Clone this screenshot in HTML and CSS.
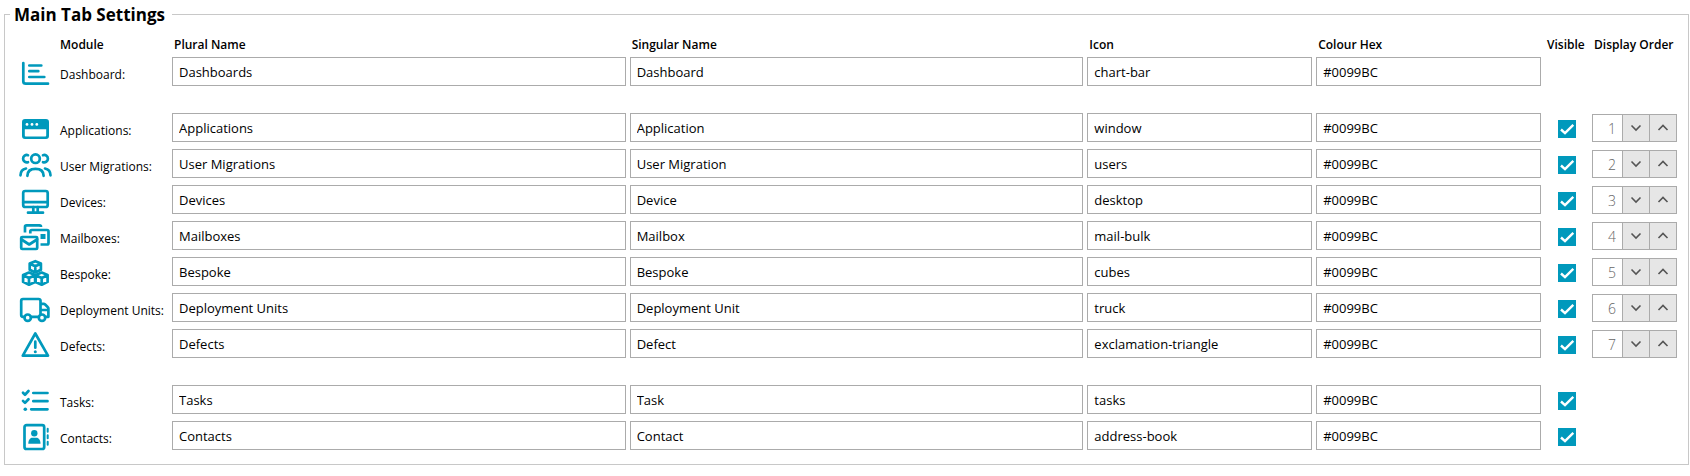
FILE: index.html
```html
<!DOCTYPE html>
<html lang="en">
<head>
    <meta charset="UTF-8">
    <meta name="viewport" content="width=device-width, initial-scale=1.0">
    <title>Main Tab Settings</title>
    <link rel="stylesheet" href="styles.css">
</head>
<body>
<form>
    <fieldset class="settings">
        <legend>Main Tab Settings</legend>

        <table class="modules">
            <thead>
                <tr>
                    <td></td>
                    <th>Module</th>
                    <th>Plural Name</th>
                    <th>Singular Name</th>
                    <th>Icon</th>
                    <th>Colour Hex</th>
                    <th>Visible</th>
                    <th>Display Order</th>
                </tr>
            </thead>

            <tbody>
                <tr>
                    <td class="icon"><svg viewBox="0 0 36 30"><path d="M5.3 5v18.2a2.5 2.5 0 0 0 2.5 2.5H30M11.3 7.5h12M11.3 13.2h9M11.3 19h15"/></svg></td>
                    <td class="name"><label for="dashboard">Dashboard:</label></td>
                    <td class="field"><input type="text" id="dashboard" value="Dashboards"></td>
                    <td class="field"><input type="text" aria-label="Singular name" value="Dashboard"></td>
                    <td class="field"><input type="text" aria-label="Icon" value="chart-bar"></td>
                    <td class="field"><input type="text" aria-label="Colour hex" value="#0099BC"></td>
                </tr>
            </tbody>

            <tbody>
                <tr>
                    <td class="icon"><svg viewBox="0 0 36 30"><path class="solid" fill-rule="evenodd" d="M7 5h21a3 3 0 0 1 3 3v14a3 3 0 0 1-3 3H7a3 3 0 0 1-3-3V8a3 3 0 0 1 3-3zM6.8 15.3v6.2a1 1 0 0 0 1 1h19.4a1 1 0 0 0 1-1v-6.2z"/><g fill="#fff" stroke="none"><circle cx="9" cy="10.4" r="1.4"/><circle cx="14" cy="10.4" r="1.4"/><circle cx="18.8" cy="10.4" r="1.4"/></g></svg></td>
                    <td class="name"><label for="applications">Applications:</label></td>
                    <td class="field"><input type="text" id="applications" value="Applications"></td>
                    <td class="field"><input type="text" aria-label="Singular name" value="Application"></td>
                    <td class="field"><input type="text" aria-label="Icon" value="window"></td>
                    <td class="field"><input type="text" aria-label="Colour hex" value="#0099BC"></td>
                    <td class="visible"><input type="checkbox" aria-label="Visible" checked></td>
                    <td class="order">
                        <div class="spinner">
                            <input type="text" aria-label="Display order" value="1">
                            <button type="button" aria-label="Down"><svg viewBox="0 0 12 8"><path d="M1.5 1.5 6 6l4.5-4.5"/></svg></button>
                            <button type="button" aria-label="Up"><svg viewBox="0 0 12 8"><path d="M1.5 6 6 1.5 10.5 6"/></svg></button>
                        </div>
                    </td>
                </tr>
                <tr>
                    <td class="icon"><svg viewBox="0 0 36 30"><circle cx="17.5" cy="8.7" r="4.3"/><path d="M9.4 25.8c0-4.6 3.2-7 8.1-7s8.1 2.400 8.1 7M10 5.2a3.7 3.700 0 1 0 0 7M25 5.200a3.700 3.700 0 1 1 0 7M2.500 25.300c.1-3.800 1.600-6.100 5.500-6.800M32.500 25.300c-.1-3.800-1.600-6.100-5.500-6.800"/></svg></td>
                    <td class="name"><label for="users">User Migrations:</label></td>
                    <td class="field"><input type="text" id="users" value="User Migrations"></td>
                    <td class="field"><input type="text" aria-label="Singular name" value="User Migration"></td>
                    <td class="field"><input type="text" aria-label="Icon" value="users"></td>
                    <td class="field"><input type="text" aria-label="Colour hex" value="#0099BC"></td>
                    <td class="visible"><input type="checkbox" aria-label="Visible" checked></td>
                    <td class="order">
                        <div class="spinner">
                            <input type="text" aria-label="Display order" value="2">
                            <button type="button" aria-label="Down"><svg viewBox="0 0 12 8"><path d="M1.5 1.5 6 6l4.5-4.5"/></svg></button>
                            <button type="button" aria-label="Up"><svg viewBox="0 0 12 8"><path d="M1.5 6 6 1.5 10.5 6"/></svg></button>
                        </div>
                    </td>
                </tr>
                <tr>
                    <td class="icon"><svg viewBox="0 0 36 30"><rect x="5.2" y="5" width="24.5" height="16" rx="2"/><path d="M5.2 16.2h24.5M15.3 21v5.5M19.7 21v5.5M10 26.7h15"/></svg></td>
                    <td class="name"><label for="devices">Devices:</label></td>
                    <td class="field"><input type="text" id="devices" value="Devices"></td>
                    <td class="field"><input type="text" aria-label="Singular name" value="Device"></td>
                    <td class="field"><input type="text" aria-label="Icon" value="desktop"></td>
                    <td class="field"><input type="text" aria-label="Colour hex" value="#0099BC"></td>
                    <td class="visible"><input type="checkbox" aria-label="Visible" checked></td>
                    <td class="order">
                        <div class="spinner">
                            <input type="text" aria-label="Display order" value="3">
                            <button type="button" aria-label="Down"><svg viewBox="0 0 12 8"><path d="M1.5 1.5 6 6l4.5-4.5"/></svg></button>
                            <button type="button" aria-label="Up"><svg viewBox="0 0 12 8"><path d="M1.5 6 6 1.5 10.5 6"/></svg></button>
                        </div>
                    </td>
                </tr>
                <tr>
                    <td class="icon"><svg viewBox="0 0 36 30"><g stroke-linecap="butt"><path d="M7 10.5V4.9a1.5 1.5 0 0 1 1.5-1.5h13A1.5 1.5 0 0 1 23 4.9M12.3 11.5v-2A1.5 1.5 0 0 1 13.800 8H29a1.5 1.5 0 0 1 1.5 1.5V21a1.5 1.5 0 0 1-1.5 1.5h-6.5"/></g><path class="solid" d="M22.500 12h5v5h-5z"/><rect x="3.200" y="15" width="16" height="12" rx="1"/><path d="m3.5 17.5 7.7 5 7.8-5"/></svg></td>
                    <td class="name"><label for="mailboxes">Mailboxes:</label></td>
                    <td class="field"><input type="text" id="mailboxes" value="Mailboxes"></td>
                    <td class="field"><input type="text" aria-label="Singular name" value="Mailbox"></td>
                    <td class="field"><input type="text" aria-label="Icon" value="mail-bulk"></td>
                    <td class="field"><input type="text" aria-label="Colour hex" value="#0099BC"></td>
                    <td class="visible"><input type="checkbox" aria-label="Visible" checked></td>
                    <td class="order">
                        <div class="spinner">
                            <input type="text" aria-label="Display order" value="4">
                            <button type="button" aria-label="Down"><svg viewBox="0 0 12 8"><path d="M1.5 1.5 6 6l4.5-4.5"/></svg></button>
                            <button type="button" aria-label="Up"><svg viewBox="0 0 12 8"><path d="M1.5 6 6 1.5 10.5 6"/></svg></button>
                        </div>
                    </td>
                </tr>
                <tr>
                    <td class="icon"><svg viewBox="0 0 36 30"><path d="m17.3 3.2 5.6 2.3v6.3l-5.6 2.7-5.600-2.700V5.500zM11.700 5.700l5.600 2.500 5.600-2.500M17.300 8.200v6"/><path d="m11 14.600 6.100 2.400v6.900L11 26.700l-5.900-2.800V17zM5.100 17.300l5.900 2.600 6.100-2.600M11 19.900v6.500"/><path d="m23.700 14.600 5.900 2.400v6.900l-5.900 2.800-6.100-2.800V17zM17.600 17.300l6.100 2.600 5.900-2.600M23.700 19.900v6.500"/></svg></td>
                    <td class="name"><label for="bespoke">Bespoke:</label></td>
                    <td class="field"><input type="text" id="bespoke" value="Bespoke"></td>
                    <td class="field"><input type="text" aria-label="Singular name" value="Bespoke"></td>
                    <td class="field"><input type="text" aria-label="Icon" value="cubes"></td>
                    <td class="field"><input type="text" aria-label="Colour hex" value="#0099BC"></td>
                    <td class="visible"><input type="checkbox" aria-label="Visible" checked></td>
                    <td class="order">
                        <div class="spinner">
                            <input type="text" aria-label="Display order" value="5">
                            <button type="button" aria-label="Down"><svg viewBox="0 0 12 8"><path d="M1.5 1.5 6 6l4.5-4.5"/></svg></button>
                            <button type="button" aria-label="Up"><svg viewBox="0 0 12 8"><path d="M1.5 6 6 1.5 10.5 6"/></svg></button>
                        </div>
                    </td>
                </tr>
                <tr>
                    <td class="icon"><svg viewBox="0 0 36 30"><circle cx="9.7" cy="23.7" r="3.2"/><circle cx="24" cy="23.7" r="3.2"/><path d="M6.3 22.8H5A1.8 1.8 0 0 1 3.200 21V6.800A1.800 1.800 0 0 1 5 5h15.700a1.800 1.800 0 0 1 1.800 1.800v13.500M13 22.800h7.800M22.500 9.800h3.300a1.500 1.500 0 0 1 1.100.5l3 3a1.500 1.500 0 0 1 .5 1.100v8.400h-3.200M22.500 16h8"/></svg></td>
                    <td class="name"><label for="units">Deployment Units:</label></td>
                    <td class="field"><input type="text" id="units" value="Deployment Units"></td>
                    <td class="field"><input type="text" aria-label="Singular name" value="Deployment Unit"></td>
                    <td class="field"><input type="text" aria-label="Icon" value="truck"></td>
                    <td class="field"><input type="text" aria-label="Colour hex" value="#0099BC"></td>
                    <td class="visible"><input type="checkbox" aria-label="Visible" checked></td>
                    <td class="order">
                        <div class="spinner">
                            <input type="text" aria-label="Display order" value="6">
                            <button type="button" aria-label="Down"><svg viewBox="0 0 12 8"><path d="M1.5 1.5 6 6l4.5-4.5"/></svg></button>
                            <button type="button" aria-label="Up"><svg viewBox="0 0 12 8"><path d="M1.5 6 6 1.5 10.5 6"/></svg></button>
                        </div>
                    </td>
                </tr>
                <tr>
                    <td class="icon"><svg viewBox="0 0 36 30"><path d="M17.3 3.5 30 25.7H4.8zM17.3 11.7v6"/><circle class="solid" cx="17.3" cy="21.7" r="1.5"/></svg></td>
                    <td class="name"><label for="defects">Defects:</label></td>
                    <td class="field"><input type="text" id="defects" value="Defects"></td>
                    <td class="field"><input type="text" aria-label="Singular name" value="Defect"></td>
                    <td class="field"><input type="text" aria-label="Icon" value="exclamation-triangle"></td>
                    <td class="field"><input type="text" aria-label="Colour hex" value="#0099BC"></td>
                    <td class="visible"><input type="checkbox" aria-label="Visible" checked></td>
                    <td class="order">
                        <div class="spinner">
                            <input type="text" aria-label="Display order" value="7">
                            <button type="button" aria-label="Down"><svg viewBox="0 0 12 8"><path d="M1.5 1.5 6 6l4.5-4.5"/></svg></button>
                            <button type="button" aria-label="Up"><svg viewBox="0 0 12 8"><path d="M1.5 6 6 1.5 10.5 6"/></svg></button>
                        </div>
                    </td>
                </tr>
            </tbody>

            <tbody>
                <tr>
                    <td class="icon"><svg viewBox="0 0 36 30"><path d="m5 6.7 2 2L10.500 5M5 14.900l2 2 3.500-3.700M15.300 7h14.200M15.300 15.200h14.200M13.200 23.300h16.300"/><circle class="solid" cx="7.3" cy="23.3" r="1.8"/></svg></td>
                    <td class="name"><label for="tasks">Tasks:</label></td>
                    <td class="field"><input type="text" id="tasks" value="Tasks"></td>
                    <td class="field"><input type="text" aria-label="Singular name" value="Task"></td>
                    <td class="field"><input type="text" aria-label="Icon" value="tasks"></td>
                    <td class="field"><input type="text" aria-label="Colour hex" value="#0099BC"></td>
                    <td class="visible"><input type="checkbox" aria-label="Visible" checked></td>
                </tr>
                <tr>
                    <td class="icon"><svg viewBox="0 0 36 30"><rect x="6.5" y="3.2" width="19.7" height="23.8" rx="2"/><path stroke-width="2" d="M29.7 6.700v3M29.700 13.200v3M29.700 19.800v3"/><circle class="solid" cx="16.3" cy="11.3" r="3.2"/><path class="solid" d="M10.3 21.8c0-3.600 1.700-6 4-6h4.200c2.300 0 4 2.400 4 6z"/></svg></td>
                    <td class="name"><label for="contacts">Contacts:</label></td>
                    <td class="field"><input type="text" id="contacts" value="Contacts"></td>
                    <td class="field"><input type="text" aria-label="Singular name" value="Contact"></td>
                    <td class="field"><input type="text" aria-label="Icon" value="address-book"></td>
                    <td class="field"><input type="text" aria-label="Colour hex" value="#0099BC"></td>
                    <td class="visible"><input type="checkbox" aria-label="Visible" checked></td>
                </tr>
            </tbody>
        </table>
    </fieldset>
</form>
</body>
</html>
```

FILE: styles.css
```css
* {
    box-sizing: border-box;
}

body {
    margin: 0;
    background-color: #fff;
    color: #000;
    font-family: "Open Sans", "Noto Sans", sans-serif;
    font-size: 13px;
}

input,
button {
    font-family: inherit;
    margin: 0;
}

.settings {
    margin: 1px 1px 0 4px;
    padding: 7px 9px 7px 11px;
    border: 1px solid #c8c8c8;
    min-width: 0;
}

.settings legend {
    margin-left: -6px;
    padding: 2px 7px 0 4px;
    font-size: 17px;
    font-weight: 700;
    line-height: 24px;
}

/* table */
.modules,
.modules thead,
.modules tbody {
    display: block;
}

.modules tr {
    display: grid;
    grid-template-columns: 40px 114px 2fr 2fr 1fr 1fr 47px 89px;
}

.modules th,
.modules td {
    padding: 0 2px;
    min-width: 0;
}

.modules th {
    height: 23px;
    padding: 0 0 0 4px;
    font-size: 12px;
    font-weight: 600;
    line-height: 22px;
    text-align: left;
    white-space: nowrap;
}

.modules tbody tr {
    height: 36px;
}

.modules tbody + tbody {
    margin-top: 20px;
}

/* module icon and name */
.modules .icon {
    padding-top: 1px;
}

.icon svg {
    display: block;
    width: 36px;
    height: 30px;
    fill: none;
    stroke: #0099bc;
    stroke-width: 2.7;
    stroke-linecap: round;
    stroke-linejoin: round;
}

.icon svg .solid {
    fill: #0099bc;
    stroke: none;
}

.modules .name {
    padding-left: 4px;
    font-size: 12px;
    line-height: 36px;
    white-space: nowrap;
}

/* text boxes */
.field input {
    display: block;
    width: 100%;
    height: 29px;
    padding: 0 6px;
    border: 1px solid #ababab;
    border-radius: 0;
    background-color: #fff;
    color: #000;
    font-size: 13px;
}

/* tick box */
.modules .visible {
    padding: 7px 0 0 15px;
}

.visible input {
    display: block;
    width: 18px;
    height: 18px;
    appearance: none;
    background: #0099bc;
}

.visible input:checked {
    background: #0099bc url("data:image/svg+xml,%3Csvg xmlns='http://www.w3.org/2000/svg' viewBox='0 0 18 18'%3E%3Cpath d='M3 9.5 7 13.2 15.3 4.8' fill='none' stroke='%23fff' stroke-width='2.4'/%3E%3C/svg%3E");
}

/* display order */
.modules .order {
    padding-top: 1px;
}

.spinner {
    display: flex;
    height: 28px;
    border: 1px solid #ababab;
}

.spinner input {
    flex: 1;
    width: 0;
    padding: 0 6px 0 0;
    border: 0;
    color: #666;
    font-size: 14px;
    font-weight: 300;
    text-align: right;
}

.spinner button {
    display: flex;
    align-items: center;
    justify-content: center;
    width: 27px;
    padding: 0;
    border: 0;
    border-left: 1px solid #ababab;
    background-color: #e6e6e6;
}

.spinner svg {
    width: 12px;
    height: 8px;
    fill: none;
    stroke: #555;
    stroke-width: 1.6;
}
```
